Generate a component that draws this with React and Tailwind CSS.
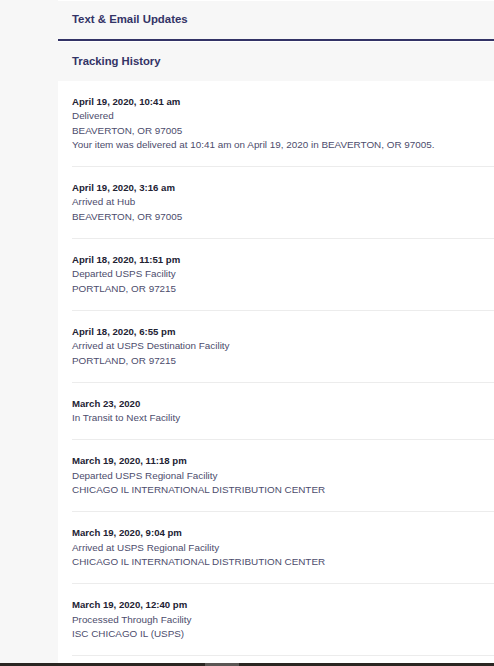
import React from 'react';

const events = [
  { date: 'April 19, 2020, 10:41 am', lines: ['Delivered', 'BEAVERTON, OR 97005', 'Your item was delivered at 10:41 am on April 19, 2020 in BEAVERTON, OR 97005.'] },
  { date: 'April 19, 2020, 3:16 am', lines: ['Arrived at Hub', 'BEAVERTON, OR 97005'] },
  { date: 'April 18, 2020, 11:51 pm', lines: ['Departed USPS Facility', 'PORTLAND, OR 97215'] },
  { date: 'April 18, 2020, 6:55 pm', lines: ['Arrived at USPS Destination Facility', 'PORTLAND, OR 97215'] },
  { date: 'March 23, 2020', lines: ['In Transit to Next Facility'] },
  { date: 'March 19, 2020, 11:18 pm', lines: ['Departed USPS Regional Facility', 'CHICAGO IL INTERNATIONAL DISTRIBUTION CENTER'] },
  { date: 'March 19, 2020, 9:04 pm', lines: ['Arrived at USPS Regional Facility', 'CHICAGO IL INTERNATIONAL DISTRIBUTION CENTER'] },
  { date: 'March 19, 2020, 12:40 pm', lines: ['Processed Through Facility', 'ISC CHICAGO IL (USPS)'] },
];

export default function App() {
  return (
    <div className="h-[666px] w-full flex flex-col overflow-hidden bg-[#f7f7f7] font-['Liberation_Sans',Arial,sans-serif]">
      <div className="flex-1 flex overflow-hidden">
        <div className="w-[58px] shrink-0 bg-[#f7f7f7]" />
        <div className="flex-1 flex flex-col">
          <div className="h-[39px] border-t border-white flex items-center pl-[14px] text-[11.4px] font-bold text-[#333366]">
            Text &amp; Email Updates
          </div>
          <div className="h-[2px] bg-[#333366]" />
          <div className="h-[40px] border-t border-white flex items-center pl-[14px] text-[11.3px] font-bold text-[#333366]">
            Tracking History
          </div>
          <div className="flex-1 bg-white pl-[14px]">
            {events.map((e, i) => (
              <div key={i} className="pt-[14px] pb-[14px] border-b border-[#ececec] leading-[14.3px]">
                <div className="text-[9.6px] font-bold text-[#222233]">{e.date}</div>
                {e.lines.map((l, j) => (
                  <div key={j} className="text-[9.9px] text-[#4c4c6c]">{l}</div>
                ))}
              </div>
            ))}
          </div>
        </div>
      </div>
      <div className="h-[3px] flex bg-[#2a2622]">
        <div className="w-[205px]" />
        <div className="w-[34px] bg-[#5a5654]" />
      </div>
    </div>
  );
}
